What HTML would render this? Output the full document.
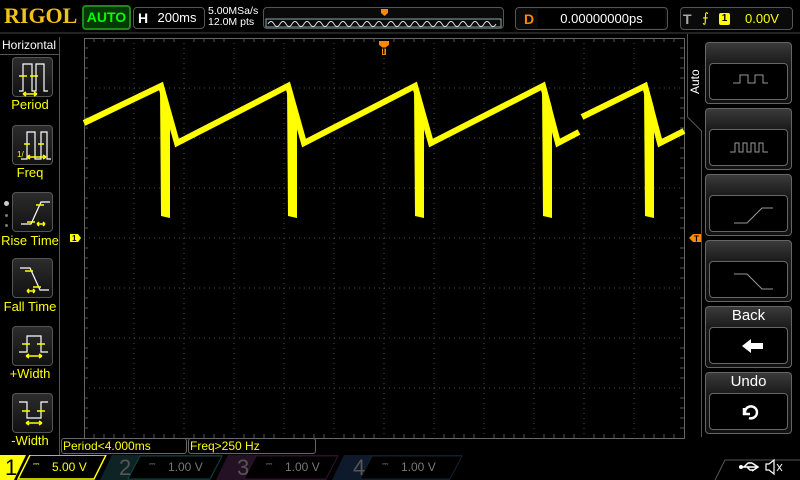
<!DOCTYPE html>
<html><head><meta charset="utf-8"><style>
*{margin:0;padding:0;box-sizing:border-box}
body{width:800px;height:480px;background:#000;overflow:hidden;position:relative;font-family:"Liberation Sans",sans-serif}
.a{position:absolute}
.box{position:absolute;border:1px solid #555;border-radius:4px;background:#0a0a0a}
.lbl{position:absolute;color:#ffff00;font-size:13px;text-align:center;width:60px;left:0}
.btn{position:absolute;left:12px;width:41px;height:40px;border:1px solid #555;border-radius:4px;background:linear-gradient(#2c2c2c,#111)}
.rb{position:absolute;left:705px;width:87px;height:62px;border:1px solid #666;border-radius:4px;background:linear-gradient(#3a3a3a,#1a1a1a 35%,#111)}
.rb .in{position:absolute;left:3px;right:3px;top:20px;bottom:3px;border:1px solid #666;border-radius:4px;background:#000}
</style></head><body>
<div class="a" style="left:4px;top:3px;font-family:'Liberation Serif',serif;font-weight:bold;font-size:22px;color:#f2c21a">RIGOL</div>
<div class="a" style="left:82px;top:5px;width:49px;height:25px;border:2px solid #1e8a1e;border-radius:4px;background:#063806;color:#00ff00;font-weight:bold;font-size:14px;line-height:21px;text-align:center">AUTO</div>
<div class="box" style="left:133px;top:7px;width:72px;height:22px;background:#000"><span class="a" style="left:4px;top:2px;color:#fff;font-weight:bold;font-size:14px">H</span><div class="a" style="left:17px;top:1px;width:52px;height:18px;background:#000;color:#fff;font-size:13px;line-height:18px;text-align:center">200ms</div></div>
<div class="a" style="left:208px;top:6px;color:#fff;font-size:10.5px;line-height:11px">5.00MSa/s<br>12.0M pts</div>
<div class="box" style="left:263px;top:7px;width:241px;height:22px"></div>
<svg class="a" style="left:0;top:0" width="800" height="480">
<rect x="266" y="19" width="235" height="8" fill="none" stroke="#8aa" stroke-width="1"/>
<path d="M268 24 q3 -5 6 0 t6 0 t6 0 t6 0 t6 0 t6 0 t6 0 t6 0 t6 0 t6 0 t6 0 t6 0 t6 0 t6 0 t6 0 t6 0 t6 0 t6 0 t6 0 t6 0 t6 0 t6 0 t6 0 t6 0 t6 0 t6 0 t6 0 t6 0 t6 0 t6 0 t6 0 t6 0 t6 0 t6 0 t6 0 t6 0 t6 0 t6 0" fill="none" stroke="#ddd" stroke-width="1"/>
<path d="M381 9h7v4l-3.5 3l-3.5-3z" fill="#f80"/>
<line x1="0" y1="33" x2="800" y2="33" stroke="#444"/>
<g stroke="#4a4a4a" stroke-width="1" stroke-dasharray="1,4">
<line x1="134" y1="38" x2="134" y2="438"/><line x1="184" y1="38" x2="184" y2="438"/><line x1="234" y1="38" x2="234" y2="438"/><line x1="284" y1="38" x2="284" y2="438"/><line x1="334" y1="38" x2="334" y2="438"/><line x1="384" y1="38" x2="384" y2="438"/><line x1="434" y1="38" x2="434" y2="438"/><line x1="484" y1="38" x2="484" y2="438"/><line x1="534" y1="38" x2="534" y2="438"/><line x1="584" y1="38" x2="584" y2="438"/><line x1="634" y1="38" x2="634" y2="438"/>
<line x1="84" y1="88" x2="684" y2="88"/><line x1="84" y1="138" x2="684" y2="138"/><line x1="84" y1="188" x2="684" y2="188"/><line x1="84" y1="238" x2="684" y2="238"/><line x1="84" y1="288" x2="684" y2="288"/><line x1="84" y1="338" x2="684" y2="338"/><line x1="84" y1="388" x2="684" y2="388"/>
</g>
<rect x="84.5" y="38.5" width="600" height="400" fill="none" stroke="#666"/>
<g stroke="#555">
<path d="M84 48h4M84 58h4M84 68h4M84 78h4M84 98h4M84 108h4M84 118h4M84 128h4M84 148h4M84 158h4M84 168h4M84 178h4M84 198h4M84 208h4M84 218h4M84 228h4M84 248h4M84 258h4M84 268h4M84 278h4M84 298h4M84 308h4M84 318h4M84 328h4M84 348h4M84 358h4M84 368h4M84 378h4M84 398h4M84 408h4M84 418h4M84 428h4"/>
<path d="M680 48h4M680 58h4M680 68h4M680 78h4M680 98h4M680 108h4M680 118h4M680 128h4M680 148h4M680 158h4M680 168h4M680 178h4M680 198h4M680 208h4M680 218h4M680 228h4M680 248h4M680 258h4M680 268h4M680 278h4M680 298h4M680 308h4M680 318h4M680 328h4M680 348h4M680 358h4M680 368h4M680 378h4M680 398h4M680 408h4M680 418h4M680 428h4"/>
<path d="M94 38v4M104 38v4M114 38v4M124 38v4M144 38v4M154 38v4M164 38v4M174 38v4M194 38v4M204 38v4M214 38v4M224 38v4M244 38v4M254 38v4M264 38v4M274 38v4M294 38v4M304 38v4M314 38v4M324 38v4M344 38v4M354 38v4M364 38v4M374 38v4M394 38v4M404 38v4M414 38v4M424 38v4M444 38v4M454 38v4M464 38v4M474 38v4M494 38v4M504 38v4M514 38v4M524 38v4M544 38v4M554 38v4M564 38v4M574 38v4M594 38v4M604 38v4M614 38v4M624 38v4M644 38v4M654 38v4M664 38v4M674 38v4"/>
<path d="M94 434v4M104 434v4M114 434v4M124 434v4M144 434v4M154 434v4M164 434v4M174 434v4M194 434v4M204 434v4M214 434v4M224 434v4M244 434v4M254 434v4M264 434v4M274 434v4M294 434v4M304 434v4M314 434v4M324 434v4M344 434v4M354 434v4M364 434v4M374 434v4M394 434v4M404 434v4M414 434v4M424 434v4M444 434v4M454 434v4M464 434v4M474 434v4M494 434v4M504 434v4M514 434v4M524 434v4M544 434v4M554 434v4M564 434v4M574 434v4M594 434v4M604 434v4M614 434v4M624 434v4M644 434v4M654 434v4M664 434v4M674 434v4"/>
</g>
<g fill="#ffff00" stroke="none">
<path d="M160 86L164 86 170 108 170 218 161 216z"/><path d="M287 86L291 86 297 108 297 218 288 216z"/><path d="M414 86L418 86 424 108 424 218 415 216z"/><path d="M542 86L546 86 552 108 552 218 543 216z"/><path d="M644 86L648 86 654 108 654 218 645 216z"/>
</g>
<g fill="none" stroke="#ffff00" stroke-width="6" stroke-linejoin="miter">
<polyline points="84,123 161,86 177,143 288,86 304,143 415,86 431,143 543,86 558,143 579,132"/>
<polyline points="582,117 645,86 660,143 684,131"/>
</g>
<path d="M379 41h10v4l-3 2v8h-4v-8l-3-2z" fill="#f80"/><text x="381" y="54" font-size="9" fill="#000" font-weight="bold">T</text>
<path d="M70 234h8l3 4-3 4h-8z" fill="#ff0"/><text x="72" y="241" font-size="8" fill="#000" font-weight="bold">1</text>
<path d="M689 238l4-4h9v8h-9z" fill="#f80"/><text x="694" y="241.5" font-size="8" fill="#000" font-weight="bold">T</text>
<line x1="59.5" y1="38" x2="59.5" y2="455" stroke="#555"/>
<path d="M687.5 34V117L701.5 131V437" fill="none" stroke="#555"/>
</svg>
<div class="box" style="left:515px;top:7px;width:153px;height:23px"><span class="a" style="left:8px;top:3px;color:#f80;font-weight:bold;font-size:14px">D</span><div class="a" style="left:22px;top:1px;width:127px;height:19px;background:#000;color:#fff;font-size:13px;line-height:19px;text-align:center">0.00000000ps</div></div>
<div class="box" style="left:680px;top:7px;width:113px;height:23px"><span class="a" style="left:2px;top:3px;color:#aaa;font-weight:bold;font-size:14px">T</span><span class="a" style="left:21px;top:2px;color:#ff0;font-size:13px">⨍</span><span class="a" style="left:38px;top:5px;width:11px;height:12px;background:#ff0;border-radius:2px;color:#000;font-size:10px;font-weight:bold;text-align:center;line-height:12px">1</span><span class="a" style="left:64px;top:3px;color:#ff0;font-size:13px">0.00V</span></div>
<div class="a" style="left:0;top:37px;width:60px;height:18px;border:1px solid #555;border-left:none;border-top:none;color:#fff;font-size:12px;padding-left:2px;line-height:17px">Horizontal</div>
<div class="btn" style="top:57px"><svg width="41" height="40"><path d="M6 33h4V6h9v27h4V6h8v27h4" fill="none" stroke="#fff" stroke-width="1.2"/><path d="M6 18h8M17 18h8" stroke="#ff0" stroke-width="1.5"/><path d="M10 36h14M10 36l3-2M10 36l3 2M24 36l-3-2M24 36l-3 2" stroke="#ff0" stroke-width="1.5"/></svg></div>
<div class="lbl" style="top:97px">Period</div>
<div class="btn" style="top:125px"><svg width="41" height="40"><path d="M8 33h6V6h8v27h6V6h6v27h4" fill="none" stroke="#fff" stroke-width="1.2"/><path d="M11 18h6M25 18h6" stroke="#ff0" stroke-width="1.5"/><path d="M14 31h19M14 31l3-2M14 31l3 2M33 31l-3-2M33 31l-3 2" stroke="#ff0" stroke-width="1.5"/><text x="4" y="31" font-size="8" fill="#ff0">1/</text></svg></div>
<div class="lbl" style="top:165px">Freq</div>
<div class="btn" style="top:192px"><svg width="41" height="40"><path d="M8 31h10L28 9h9" fill="none" stroke="#fff" stroke-width="1.2"/><path d="M14 29h8M23 12h8" stroke="#ff0" stroke-width="1.5"/><path d="M24 31h8M24 31l2-2M24 31l2 2M32 31l-2-2M32 31l-2 2" stroke="#ff0" stroke-width="1.5"/></svg></div>
<div class="a" style="left:4px;top:201px;width:5px;height:5px;border-radius:3px;background:#ccc"></div>
<div class="a" style="left:5px;top:214px;width:3px;height:3px;border-radius:2px;background:#777"></div>
<div class="a" style="left:5px;top:224px;width:3px;height:3px;border-radius:2px;background:#777"></div>
<div class="lbl" style="top:233px">Rise Time</div>
<div class="btn" style="top:258px"><svg width="41" height="40"><path d="M7 9h10L27 31h9" fill="none" stroke="#fff" stroke-width="1.2"/><path d="M12 12h8M20 28h8" stroke="#ff0" stroke-width="1.5"/><path d="M14 32h8M14 32l2-2M14 32l2 2M22 32l-2-2M22 32l-2 2" stroke="#ff0" stroke-width="1.5"/></svg></div>
<div class="lbl" style="top:299px">Fall Time</div>
<div class="btn" style="top:326px"><svg width="41" height="40"><path d="M6 25h8V9h14v16h7" fill="none" stroke="#fff" stroke-width="1.2"/><path d="M9 17h8M24 17h8" stroke="#ff0" stroke-width="1.5"/><path d="M13 29h16M13 29l3-2M13 29l3 2M29 29l-3-2M29 29l-3 2" stroke="#ff0" stroke-width="1.5"/></svg></div>
<div class="lbl" style="top:366px">+Width</div>
<div class="btn" style="top:393px"><svg width="41" height="40"><path d="M6 8h8v16h14V8h7" fill="none" stroke="#fff" stroke-width="1.2"/><path d="M9 17h8M24 17h8" stroke="#ff0" stroke-width="1.5"/><path d="M13 29h16M13 29l3-2M13 29l3 2M29 29l-3-2M29 29l-3 2" stroke="#ff0" stroke-width="1.5"/></svg></div>
<div class="lbl" style="top:433px">-Width</div>
<div class="a" style="left:688px;top:94px;transform:rotate(-90deg);transform-origin:0 0;color:#fff;font-size:12px">Auto</div>
<div class="rb" style="top:42px"><div class="in"><svg width="79" height="37"><path d="M23 19h7v-8h8v8h7v-8h8v8h5" fill="none" stroke="#999"/></svg></div></div>
<div class="rb" style="top:108px"><div class="in"><svg width="79" height="37"><path d="M20 22h5v-9h4v9h4v-9h4v9h4v-9h4v9h4v-9h4v9h5" fill="none" stroke="#999"/></svg></div></div>
<div class="rb" style="top:174px"><div class="in"><svg width="79" height="37"><path d="M24 27h13l15-15h11" fill="none" stroke="#999"/></svg></div></div>
<div class="rb" style="top:240px"><div class="in"><svg width="79" height="37"><path d="M24 12h13l15 15h11" fill="none" stroke="#999"/></svg></div></div>
<div class="rb" style="top:306px"><div class="a" style="left:0;right:0;top:0;color:#fff;font-size:15px;text-align:center;line-height:17px">Back</div><div class="in"><svg width="79" height="37"><path d="M32 18l9-7v4h12v6H41v4z" fill="#fff"/></svg></div></div>
<div class="rb" style="top:372px"><div class="a" style="left:0;right:0;top:0;color:#fff;font-size:15px;text-align:center;line-height:17px">Undo</div><div class="in"><svg width="79" height="37"><path d="M34 14v6h6M35 19a6 6 0 1 1 4 5" fill="none" stroke="#fff" stroke-width="2.5"/></svg></div></div>
<div class="a" style="left:61px;top:438px;width:126px;height:16px;border:1px solid #666;border-radius:3px;color:#ff0;font-size:12px;line-height:14px;padding-left:1px">Period&lt;4.000ms</div>
<div class="a" style="left:188px;top:438px;width:128px;height:16px;border:1px solid #666;border-radius:3px;color:#ff0;font-size:12px;line-height:14px;padding-left:1px">Freq&gt;250 Hz</div>
<svg class="a" style="left:0;top:455px" width="800" height="25">
<path d="M0 0h26l-12 25H0z" fill="#ff0"/>
<path d="M30 0h76l-12 24H18z" fill="none" stroke="#ff0" stroke-width="1.5"/>
<path d="M112 0h110l-12 25H100z" fill="#0e2424"/><path d="M140 1h82l-12 23H128z" fill="#000" stroke="#144" />
<path d="M228 0h110l-12 25H216z" fill="#241224"/><path d="M256 1h82l-12 23H244z" fill="#000" stroke="#313"/>
<path d="M344 0h118l-12 25H332z" fill="#0e1a2c"/><path d="M372 1h90l-12 23H360z" fill="#000" stroke="#123"/>
<path d="M715 25l10-20h75" fill="none" stroke="#555"/>
</svg>
<div class="a" style="left:5px;top:455px;font-size:22px;color:#000;line-height:25px">1</div>
<div class="a" style="left:33px;top:459px;color:#ff0;font-size:8px">⎓</div>
<div class="a" style="left:52px;top:460px;color:#ff0;font-size:12px">5.00 V</div>
<div class="a" style="left:119px;top:455px;font-size:22px;color:#555;line-height:25px">2</div>
<div class="a" style="left:149px;top:459px;color:#777;font-size:8px">⎓</div>
<div class="a" style="left:168px;top:460px;color:#777;font-size:12px">1.00 V</div>
<div class="a" style="left:237px;top:455px;font-size:22px;color:#555;line-height:25px">3</div>
<div class="a" style="left:266px;top:459px;color:#777;font-size:8px">⎓</div>
<div class="a" style="left:285px;top:460px;color:#777;font-size:12px">1.00 V</div>
<div class="a" style="left:353px;top:455px;font-size:22px;color:#555;line-height:25px">4</div>
<div class="a" style="left:382px;top:459px;color:#777;font-size:8px">⎓</div>
<div class="a" style="left:401px;top:460px;color:#777;font-size:12px">1.00 V</div>
<svg class="a" style="left:738px;top:458px" width="50" height="18"><path d="M2 9h18M14 5l6 4-6 4M6 9l4-4h4M9 9l3 3h4" fill="none" stroke="#fff" stroke-width="1.5"/><circle cx="3" cy="9" r="2" fill="#fff"/><path d="M28 6h3l5-4v14l-5-4h-3z" fill="none" stroke="#fff" stroke-width="1.2"/><path d="M39 6l5 7M44 6l-5 7" stroke="#fff"/></svg>
</body></html>
